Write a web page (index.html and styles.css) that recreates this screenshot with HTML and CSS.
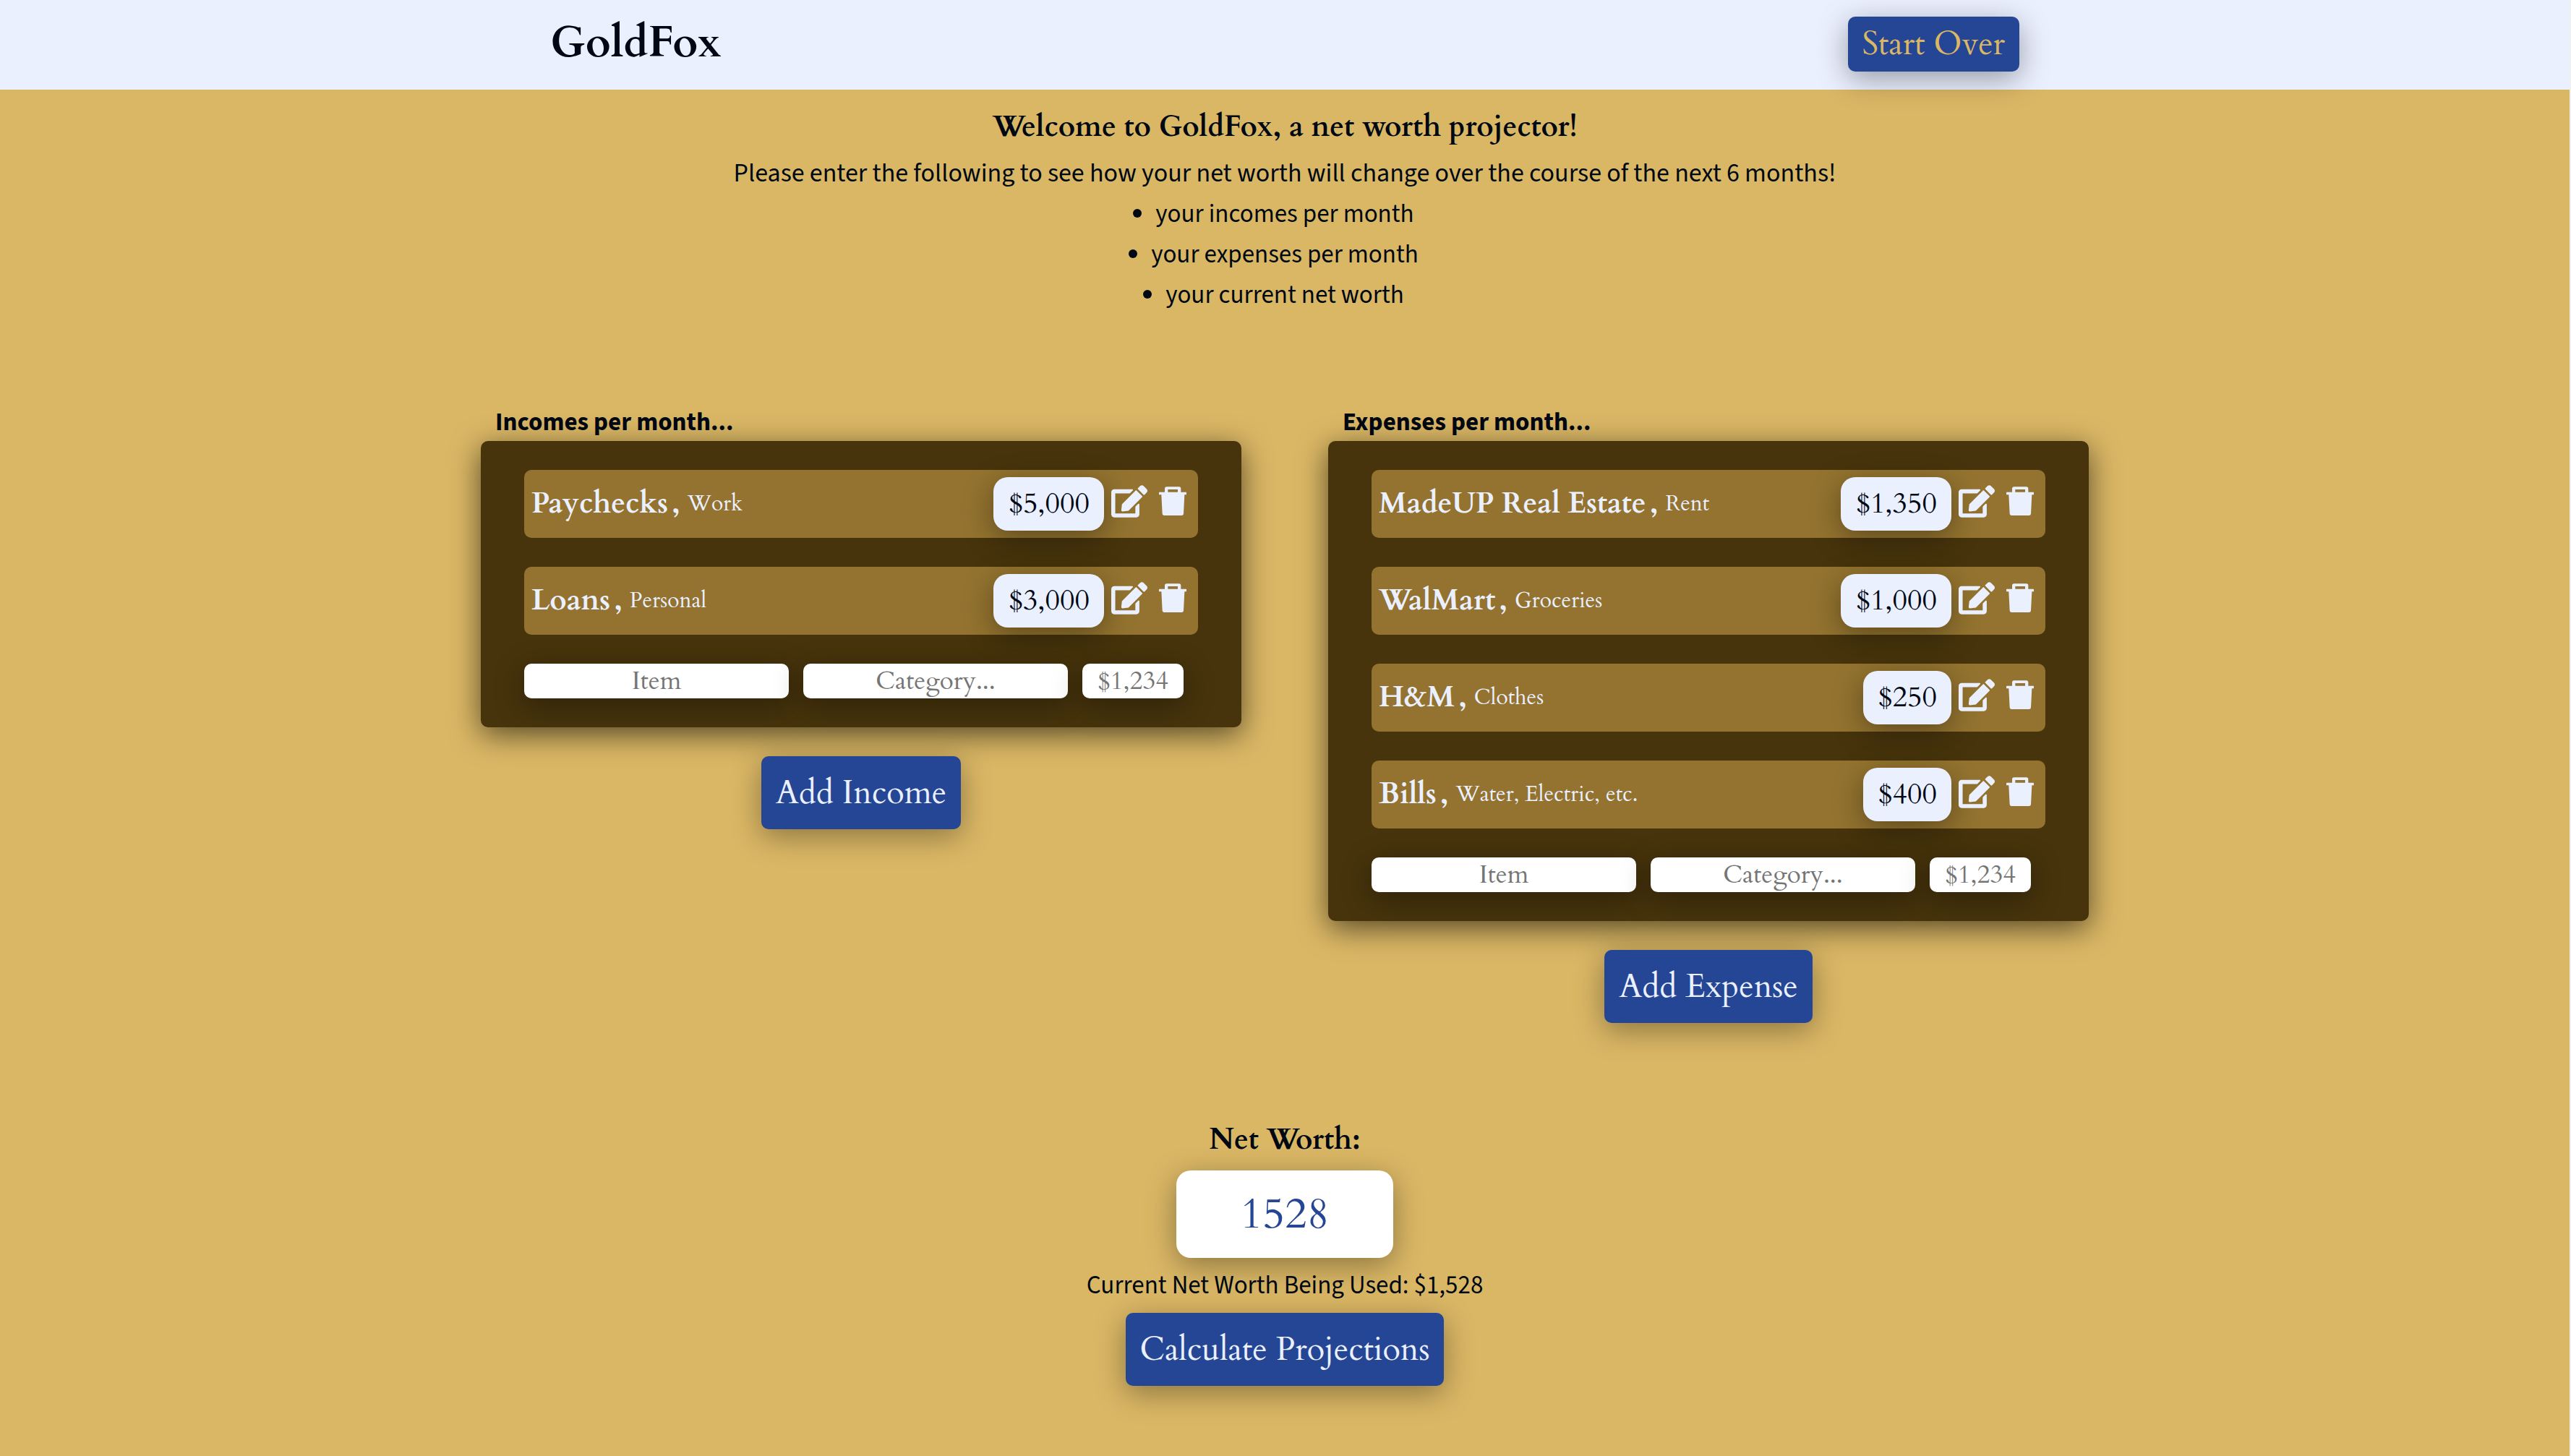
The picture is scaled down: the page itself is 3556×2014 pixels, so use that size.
FILE: index.html
```html
<!DOCTYPE html>
<html lang="en">
<head>
  <meta charset="utf-8">
  <meta name="viewport" content="width=device-width, initial-scale=1">
  <title>GoldFox</title>
  <link rel="stylesheet" href="styles.css">
</head>
<body>
  <svg class="sprite" aria-hidden="true">
    <symbol id="icon-edit" viewBox="0 0 576 512">
      <path d="M402.600 83.200l90.200 90.200c3.800 3.800 3.800 10 0 13.800L274.400 405.600l-92.800 10.300c-12.400 1.400-22.900-9.100-21.500-21.500l10.300-92.800L388.800 83.200c3.800-3.800 10-3.800 13.800 0zm162-22.900l-48.800-48.800c-15.200-15.200-39.900-15.200-55.200 0l-35.400 35.400c-3.800 3.800-3.800 10 0 13.800l90.200 90.200c3.800 3.800 10 3.800 13.800 0l35.400-35.400c15.200-15.300 15.200-40 0-55.200zM384 346.200V448H64V128h229.800c3.200 0 6.200-1.300 8.500-3.500l40-40c7.600-7.600 2.200-20.500-8.500-20.500H48C21.500 64 0 85.500 0 112v352c0 26.500 21.500 48 48 48h352c26.500 0 48-21.500 48-48V306.200c0-10.700-12.900-16-20.500-8.500l-40 40c-2.200 2.300-3.500 5.300-3.500 8.500z"/>
    </symbol>
    <symbol id="icon-trash" viewBox="0 0 114 120">
      <path fill-rule="evenodd" d="M24 23V9q0-8 8-8h51q8 0 8 8v14h21q2 0 2 2v7q0 2-2 2h-6l-4 79q-1 7-8 7H22q-7 0-8-7L10 34H2q-2 0-2-2v-7q0-2 2-2zM37 23h41V12H37z"/>
    </symbol>
  </svg>

  <header class="topbar">
    <div class="topbar-inner">
      <h1 class="brand">GoldFox</h1>
      <button class="btn btn-reset" type="button">Start Over</button>
    </div>
  </header>

  <main>
    <section class="intro">
      <h2 class="heading">Welcome to GoldFox, a net worth projector!</h2>
      <p class="lead">Please enter the following to see how your net worth will change over the course of the next 6 months!</p>
      <ul class="steps">
        <li>your incomes per month</li>
        <li>your expenses per month</li>
        <li>your current net worth</li>
      </ul>
    </section>

    <div class="ledgers">
      <form class="ledger">
        <h3 class="ledger-title">Incomes per month...</h3>
        <div class="card">
          <ul class="entries">
            <li class="entry">
              <strong class="name">Paychecks</strong><span class="comma">,</span><span class="category">Work</span>
              <span class="amount">$5,000</span>
              <button class="icon-btn" type="button" aria-label="Edit Paychecks"><svg class="edit"><use href="#icon-edit"/></svg></button>
              <button class="icon-btn" type="button" aria-label="Delete Paychecks"><svg class="trash"><use href="#icon-trash"/></svg></button>
            </li>
            <li class="entry">
              <strong class="name">Loans</strong><span class="comma">,</span><span class="category">Personal</span>
              <span class="amount">$3,000</span>
              <button class="icon-btn" type="button" aria-label="Edit Loans"><svg class="edit"><use href="#icon-edit"/></svg></button>
              <button class="icon-btn" type="button" aria-label="Delete Loans"><svg class="trash"><use href="#icon-trash"/></svg></button>
            </li>
          </ul>
          <div class="new-entry">
            <input class="field" type="text" placeholder="Item" aria-label="Income item">
            <input class="field" type="text" placeholder="Category..." aria-label="Income category">
            <input class="field field-amount" type="text" placeholder="$1,234" aria-label="Income amount">
          </div>
        </div>
        <button class="btn" type="button">Add Income</button>
      </form>

      <form class="ledger">
        <h3 class="ledger-title">Expenses per month...</h3>
        <div class="card">
          <ul class="entries">
            <li class="entry">
              <strong class="name">MadeUP Real Estate</strong><span class="comma">,</span><span class="category">Rent</span>
              <span class="amount">$1,350</span>
              <button class="icon-btn" type="button" aria-label="Edit MadeUP Real Estate"><svg class="edit"><use href="#icon-edit"/></svg></button>
              <button class="icon-btn" type="button" aria-label="Delete MadeUP Real Estate"><svg class="trash"><use href="#icon-trash"/></svg></button>
            </li>
            <li class="entry">
              <strong class="name">WalMart</strong><span class="comma">,</span><span class="category">Groceries</span>
              <span class="amount">$1,000</span>
              <button class="icon-btn" type="button" aria-label="Edit WalMart"><svg class="edit"><use href="#icon-edit"/></svg></button>
              <button class="icon-btn" type="button" aria-label="Delete WalMart"><svg class="trash"><use href="#icon-trash"/></svg></button>
            </li>
            <li class="entry">
              <strong class="name">H&amp;M</strong><span class="comma">,</span><span class="category">Clothes</span>
              <span class="amount">$250</span>
              <button class="icon-btn" type="button" aria-label="Edit H&amp;M"><svg class="edit"><use href="#icon-edit"/></svg></button>
              <button class="icon-btn" type="button" aria-label="Delete H&amp;M"><svg class="trash"><use href="#icon-trash"/></svg></button>
            </li>
            <li class="entry">
              <strong class="name">Bills</strong><span class="comma">,</span><span class="category">Water, Electric, etc.</span>
              <span class="amount">$400</span>
              <button class="icon-btn" type="button" aria-label="Edit Bills"><svg class="edit"><use href="#icon-edit"/></svg></button>
              <button class="icon-btn" type="button" aria-label="Delete Bills"><svg class="trash"><use href="#icon-trash"/></svg></button>
            </li>
          </ul>
          <div class="new-entry">
            <input class="field" type="text" placeholder="Item" aria-label="Expense item">
            <input class="field" type="text" placeholder="Category..." aria-label="Expense category">
            <input class="field field-amount" type="text" placeholder="$1,234" aria-label="Expense amount">
          </div>
        </div>
        <button class="btn" type="button">Add Expense</button>
      </form>
    </div>

    <form class="worth">
      <label class="heading" for="net-worth">Net Worth:</label>
      <input class="worth-input" id="net-worth" type="text" inputmode="numeric" value="1528">
      <p>Current Net Worth Being Used: $1,528</p>
      <button class="btn" type="button">Calculate Projections</button>
    </form>
  </main>
</body>
</html>
```
FILE: styles.css
```css
:root {
  --gold: #dab765;
  --ice: #ebf0ff;
  --blue: #254595;
  --brown: #47340c;
  --bronze: #93732f;
  --ink: #000814;
  --serif: Cardo, "Liberation Serif", serif;
  --sans: "Source Sans 3", "Noto Sans CJK JP", sans-serif;
  --shadow: 0 10px 40px rgba(0, 0, 0, 0.36);
}

* {
  box-sizing: border-box;
  margin: 0;
  padding: 0;
}

body {
  min-height: 100vh;
  border-right: 2px solid #f0f0f0;
  background: var(--gold);
  color: var(--ink);
  font: 35px/56px var(--sans);
}

ul {
  list-style: none;
}

.sprite {
  display: none;
}

.topbar {
  padding: 23px 40px 25px;
  background: var(--ice);
}

.topbar-inner {
  display: flex;
  align-items: center;
  justify-content: space-between;
  max-width: 2032px;
  margin: 0 auto;
}

.brand {
  padding-bottom: 2px;
  font: bold 60px/64px var(--serif);
}

.btn {
  padding: 20px;
  border: 0;
  border-radius: 10px;
  background: var(--blue);
  box-shadow: var(--shadow);
  color: var(--ice);
  font: 45px/61px var(--serif);
  cursor: pointer;
}

.btn-reset {
  padding: 8px 20px;
  color: var(--gold);
  line-height: 60px;
}

.heading {
  font: bold 40px/60px var(--serif);
}

.intro {
  padding: 22px 40px 122px;
  text-align: center;
}

.intro .heading {
  padding-bottom: 6px;
}

.lead {
  font-size: 36px;
}

.steps {
  display: flex;
  flex-direction: column;
  align-items: center;
  list-style: disc;
}

.ledgers {
  display: grid;
  grid-template-columns: repeat(2, minmax(0, 1fr));
  gap: 120px;
  align-items: start;
  max-width: 2224px;
  margin: 0 auto;
}

.ledger {
  display: flex;
  flex-direction: column;
  align-items: center;
}

.ledger-title {
  align-self: stretch;
  padding-left: 20px;
  font: bold 35px/52px var(--sans);
}

.card {
  align-self: stretch;
  margin-bottom: 40px;
  padding: 40px 60px;
  border-radius: 10px;
  background: var(--brown);
  box-shadow: 0 10px 40px rgba(0, 0, 0, 0.6);
}

.entry {
  display: flex;
  align-items: center;
  gap: 10px;
  margin-bottom: 40px;
  padding: 10px;
  border-radius: 10px;
  background: var(--bronze);
  color: var(--ice);
}

.name,
.comma {
  font: bold 40px/60px var(--serif);
}

.comma {
  margin-left: -5px;
}

.category {
  font: 30px/60px var(--serif);
}

.amount {
  margin-left: auto;
  padding: 7px 20px;
  border-radius: 20px;
  background: var(--ice);
  box-shadow: var(--shadow);
  color: var(--ink);
  font: 40px/60px var(--serif);
}

.icon-btn {
  display: flex;
  justify-content: center;
  width: 50px;
  padding-bottom: 8px;
  border: 0;
  background: none;
  color: inherit;
  cursor: pointer;
}

.icon-btn svg {
  fill: currentColor;
}

.edit {
  width: 50px;
  height: 45px;
}

.trash {
  width: 38px;
  height: 40px;
}

.new-entry {
  display: flex;
  gap: 20px;
  padding-right: 20px;
}

.field {
  flex: 1;
  min-width: 0;
  height: 48px;
  border: 0;
  border-radius: 10px;
  background: #fff;
  box-shadow: var(--shadow);
  color: var(--blue);
  font: 35px/48px var(--serif);
  text-align: center;
}

.field-amount {
  flex: 0 0 140px;
}

.field::placeholder {
  color: #757575;
}

.worth {
  display: flex;
  flex-direction: column;
  align-items: center;
  padding: 132px 40px 96px;
}

.worth-input {
  width: 300px;
  height: 121px;
  margin: 12px 0 10px;
  border: 0;
  border-radius: 20px;
  background: #fff;
  box-shadow: var(--shadow);
  color: var(--blue);
  font: 60px/80px var(--serif);
  text-align: center;
}

.worth p {
  margin-bottom: 10px;
}
```
